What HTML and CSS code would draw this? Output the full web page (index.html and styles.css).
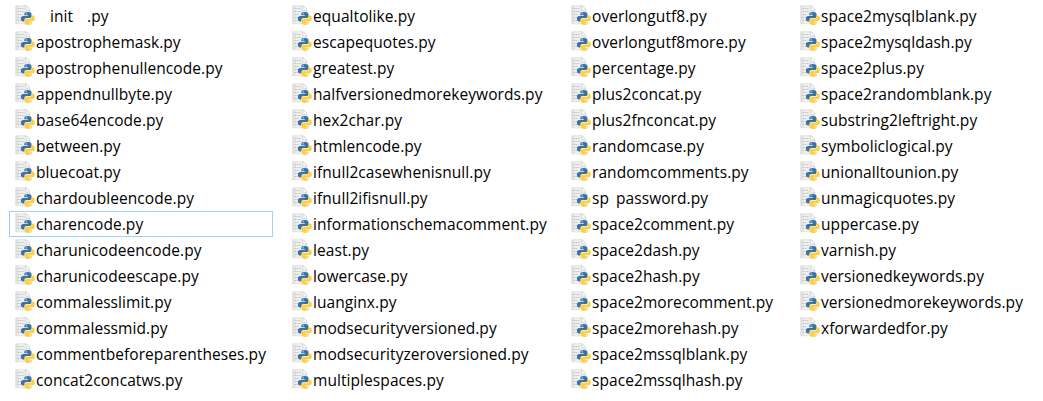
FILE: index.html
```html
<!DOCTYPE html>
<html lang="en">
<head>
<meta charset="utf-8">
<title>Files</title>
<link rel="stylesheet" href="styles.css">
</head>
<body>
<svg class="defs">
  <defs>
    <linearGradient id="paper" x1="0" y1="0" x2="1" y2="0"><stop offset="0" stop-color="#dcdcdc"/><stop offset=".3" stop-color="#f1f1f1"/><stop offset="1" stop-color="#e9e9e9"/></linearGradient>
    <symbol id="py" viewBox="0 0 20 20">
      <path d="M.7.7h9.6c2.600.6 4.300 2.800 4.500 5.600v12.500H.7z" fill="url(#paper)" stroke="#dedede" stroke-width=".7"/>
      <path d="M10 .8c1.100 1.300 1.100 3 .8 4.500 1.500-.4 3 0 4 1.100-.2-3.200-2-5.200-4.800-5.600z" fill="#fafafa" stroke="#c8c8c8" stroke-width=".6"/>
      <path d="M2.500 3.500h6.500M2.500 6.500h7M2.500 9.500h4.500M2.500 12.500h3.500M2.500 15.500h5" stroke="#c4c4c4" stroke-width="1" stroke-dasharray="1.500 .6"/>
      <path d="M12.800 7c-2.600 0-3.500.8-3.500 2v1.300h3.600v.6H8.100c-1.300 0-2.200 1-2.200 2.800s.9 2.800 2.200 2.800h1.300v-1.500c0-1.200.9-1.900 2-1.900h3.300c1 0 1.800-.7 1.800-1.700V9c0-1.200-1.200-2-3.700-2z" fill="#3973a5"/>
      <path d="M16.900 10.500v1.500c0 1.100-.9 1.900-1.900 1.900h-3.300c-1 0-1.900.8-1.900 1.700v2.400c0 1.100 1.200 1.900 3.500 1.900s3.500-.7 3.500-1.900v-1.100h-3.400v-.6h4.500c1.200 0 1.900-1 1.900-2.800s-.7-3-1.900-3z" fill="#ffcf3d"/>
      <circle cx="11.200" cy="8.800" r=".6" fill="#fff"/><circle cx="15" cy="18.200" r=".6" fill="#fff"/>
    </symbol>
  </defs>
</svg>
<main class="files">
<ul class="column column-a">
<li><svg><use href="#py"/></svg><span class="init">init</span><span class="ext">.py</span></li>
<li><svg><use href="#py"/></svg><span>apostrophemask.py</span></li>
<li><svg><use href="#py"/></svg><span>apostrophenullencode.py</span></li>
<li><svg><use href="#py"/></svg><span>appendnullbyte.py</span></li>
<li><svg><use href="#py"/></svg><span>base64encode.py</span></li>
<li><svg><use href="#py"/></svg><span>between.py</span></li>
<li><svg><use href="#py"/></svg><span>bluecoat.py</span></li>
<li><svg><use href="#py"/></svg><span>chardoubleencode.py</span></li>
<li class="focused"><svg><use href="#py"/></svg><span>charencode.py</span></li>
<li><svg><use href="#py"/></svg><span>charunicodeencode.py</span></li>
<li><svg><use href="#py"/></svg><span>charunicodeescape.py</span></li>
<li><svg><use href="#py"/></svg><span>commalesslimit.py</span></li>
<li><svg><use href="#py"/></svg><span>commalessmid.py</span></li>
<li><svg><use href="#py"/></svg><span>commentbeforeparentheses.py</span></li>
<li><svg><use href="#py"/></svg><span>concat2concatws.py</span></li>
</ul>
<ul class="column column-b">
<li><svg><use href="#py"/></svg><span>equaltolike.py</span></li>
<li><svg><use href="#py"/></svg><span>escapequotes.py</span></li>
<li><svg><use href="#py"/></svg><span>greatest.py</span></li>
<li><svg><use href="#py"/></svg><span>halfversionedmorekeywords.py</span></li>
<li><svg><use href="#py"/></svg><span>hex2char.py</span></li>
<li><svg><use href="#py"/></svg><span>htmlencode.py</span></li>
<li><svg><use href="#py"/></svg><span>ifnull2casewhenisnull.py</span></li>
<li><svg><use href="#py"/></svg><span>ifnull2ifisnull.py</span></li>
<li><svg><use href="#py"/></svg><span>informationschemacomment.py</span></li>
<li><svg><use href="#py"/></svg><span>least.py</span></li>
<li><svg><use href="#py"/></svg><span>lowercase.py</span></li>
<li><svg><use href="#py"/></svg><span>luanginx.py</span></li>
<li><svg><use href="#py"/></svg><span>modsecurityversioned.py</span></li>
<li><svg><use href="#py"/></svg><span>modsecurityzeroversioned.py</span></li>
<li><svg><use href="#py"/></svg><span>multiplespaces.py</span></li>
</ul>
<ul class="column column-c">
<li><svg><use href="#py"/></svg><span>overlongutf8.py</span></li>
<li><svg><use href="#py"/></svg><span>overlongutf8more.py</span></li>
<li><svg><use href="#py"/></svg><span>percentage.py</span></li>
<li><svg><use href="#py"/></svg><span>plus2concat.py</span></li>
<li><svg><use href="#py"/></svg><span>plus2fnconcat.py</span></li>
<li><svg><use href="#py"/></svg><span>randomcase.py</span></li>
<li><svg><use href="#py"/></svg><span>randomcomments.py</span></li>
<li><svg><use href="#py"/></svg><span class="sp">sp</span><span>password.py</span></li>
<li><svg><use href="#py"/></svg><span>space2comment.py</span></li>
<li><svg><use href="#py"/></svg><span>space2dash.py</span></li>
<li><svg><use href="#py"/></svg><span>space2hash.py</span></li>
<li><svg><use href="#py"/></svg><span>space2morecomment.py</span></li>
<li><svg><use href="#py"/></svg><span>space2morehash.py</span></li>
<li><svg><use href="#py"/></svg><span>space2mssqlblank.py</span></li>
<li><svg><use href="#py"/></svg><span>space2mssqlhash.py</span></li>
</ul>
<ul class="column column-d">
<li><svg><use href="#py"/></svg><span>space2mysqlblank.py</span></li>
<li><svg><use href="#py"/></svg><span>space2mysqldash.py</span></li>
<li><svg><use href="#py"/></svg><span>space2plus.py</span></li>
<li><svg><use href="#py"/></svg><span>space2randomblank.py</span></li>
<li><svg><use href="#py"/></svg><span>substring2leftright.py</span></li>
<li><svg><use href="#py"/></svg><span>symboliclogical.py</span></li>
<li><svg><use href="#py"/></svg><span>unionalltounion.py</span></li>
<li><svg><use href="#py"/></svg><span>unmagicquotes.py</span></li>
<li><svg><use href="#py"/></svg><span>uppercase.py</span></li>
<li><svg><use href="#py"/></svg><span>varnish.py</span></li>
<li><svg><use href="#py"/></svg><span>versionedkeywords.py</span></li>
<li><svg><use href="#py"/></svg><span>versionedmorekeywords.py</span></li>
<li><svg><use href="#py"/></svg><span>xforwardedfor.py</span></li>
</ul>
</main>
</body>
</html>
```

FILE: styles.css
```css
body {
  margin: 0;
  background: #fff;
  color: #000;
  font: 15.5px/26px "Open Sans", "Noto Sans", sans-serif;
  letter-spacing: 0.07px;
  overflow: hidden;
}
.defs { display: block; width: 0; height: 0; }
.files {
  display: grid;
  grid-template-columns: 277px 279px 229px 1fr;
  padding: 3px 0 0 9px;
}
.column { margin: 0; padding: 0; list-style: none; }
.column li {
  box-sizing: border-box;
  display: flex;
  height: 26px;
  width: 264px;
  padding-left: 5px;
  border: 1px solid transparent;
  line-height: 24px;
  white-space: nowrap;
}
.column li.focused { border-color: #99d1ff; }
.column svg { flex: none; width: 20px; height: 20px; margin: 1px 1px 0 0; }
.init { width: 37px; margin-left: 14px; }
.sp { width: 24px; }
```
